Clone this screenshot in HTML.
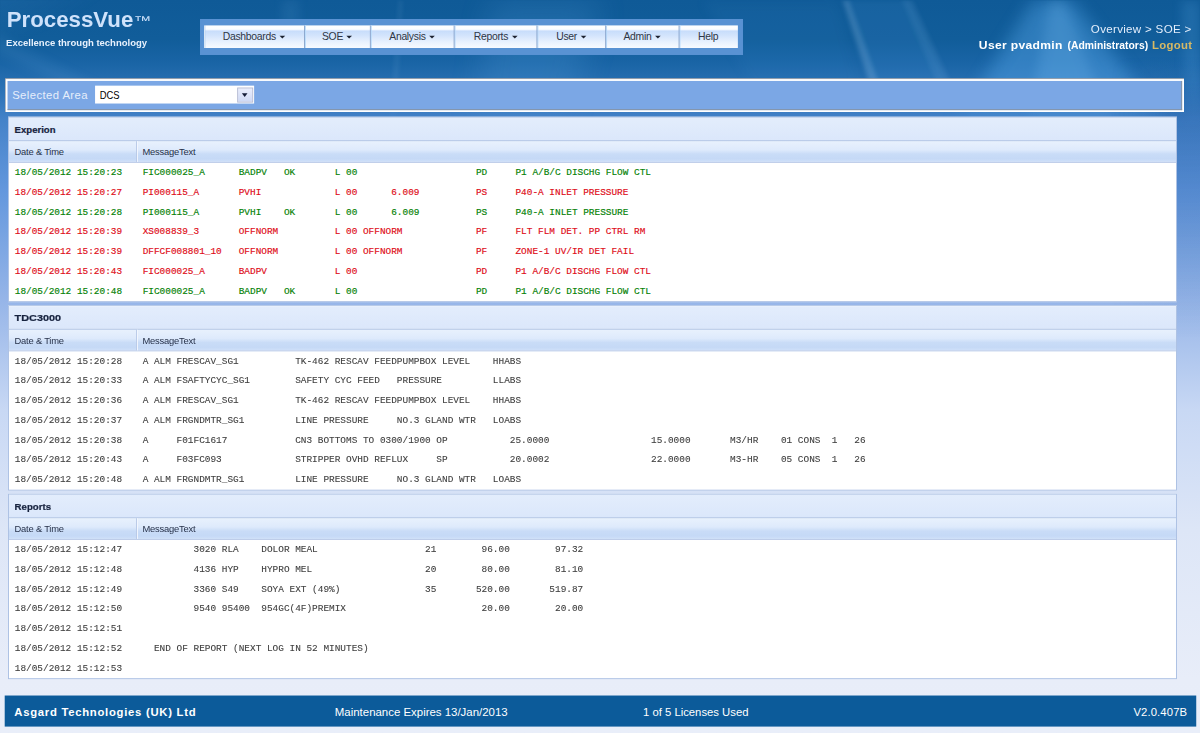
<!DOCTYPE html>
<html>
<head>
<meta charset="utf-8">
<title>ProcessVue</title>
<style>
html,body{margin:0;padding:0;width:1200px;height:733px;overflow:hidden;background:#e9eef9;}
body{font-family:"Liberation Sans",sans-serif;}
#w{position:absolute;left:0;top:0;width:1275px;height:779px;transform:scale(0.941176);transform-origin:0 0;overflow:hidden;filter:blur(0.3px);
 background:linear-gradient(to bottom,#0f5a97 0px,#115d9a 42px,#1964a5 66px,#2e74b8 100px,#4583c9 128px,#6397dd 202px,#96b5e8 319px,#c8d8f4 436px,#dde6f7 563px,#e8edf9 722px,#e9eef9 779px);}
#hdrbg{position:absolute;left:0;top:0;width:1275px;height:140px;}
#rshade{position:absolute;left:1180px;top:60px;width:95px;height:300px;background:linear-gradient(to bottom,rgba(12,70,140,0) 0,rgba(12,70,140,.22) 20%,rgba(12,70,140,.16) 50%,rgba(12,70,140,0) 100%);-webkit-mask-image:linear-gradient(to right,transparent 0,#000 70%);mask-image:linear-gradient(to right,transparent 0,#000 70%);}
#logo{position:absolute;left:7.2px;top:6.8px;color:#cfe2fb;font-weight:bold;font-size:23.65px;line-height:28px;white-space:nowrap;}
#logo .tm{font-weight:normal;font-size:13.5px;position:relative;top:-1.9px;margin-left:0px;display:inline-block;transform:scaleX(1.42);transform-origin:0 50%;}
#tag{position:absolute;left:6.5px;top:40px;color:#e8f1fd;font-weight:bold;font-size:10.1px;line-height:12px;white-space:nowrap;}
#menu{position:absolute;left:212.5px;top:20.2px;width:576px;height:38px;background:#5992d3;}
#strip{position:absolute;left:4.3px;top:6.4px;width:567px;height:24.4px;border-left:1px solid #fff;box-sizing:border-box;
 background:linear-gradient(to bottom,#ffffff 0,#fcfdff 17%,#c8ddfb 25%,#d3e4fc 45%,#e8f1fe 72%,#f8fbff 100%);}
#strip .dv{position:absolute;top:0;width:1px;height:24.4px;background:#8aa5cd;box-shadow:1px 0 0 #b9dcfc;}
#strip .it{position:absolute;top:0.8px;height:24.4px;color:#2e3646;font-size:11.05px;line-height:24.4px;text-align:center;white-space:nowrap;letter-spacing:-0.32px;}
#strip .it i{display:inline-block;width:0;height:0;border-left:3.2px solid transparent;border-right:3.2px solid transparent;border-top:3.6px solid #1c2230;margin-left:4px;vertical-align:middle;position:relative;top:-1px;}
.hr{position:absolute;white-space:nowrap;line-height:14px;transform-origin:0 50%;}
#crumb{left:1159.2px;top:24.1px;color:#e3eefc;font-size:11.5px;letter-spacing:0.3px;transform:scaleX(1.07);}
#u1{left:1040.2px;top:40.7px;color:#fff;font-weight:bold;font-size:11.3px;letter-spacing:0.3px;transform:scaleX(1.139);}
#u2{left:1134.3px;top:40.9px;color:#fff;font-weight:bold;font-size:11px;}
#u3{left:1223.6px;top:40.7px;color:#d7b964;font-weight:bold;font-size:11.3px;letter-spacing:0.3px;transform:scaleX(1.07);}
#bar{position:absolute;left:5.3px;top:82.7px;width:1252.7px;height:36.4px;box-sizing:border-box;background:#fff;border-top:1px solid #8793a3;border-left:1px solid #8793a3;}
#bar .in{position:absolute;left:2px;top:2px;right:2.1px;bottom:2.2px;background:#7ba7e5;border-right:1px solid #8793a3;border-bottom:1px solid #8793a3;}
#bar .lbl{position:absolute;left:6.6px;top:9.6px;color:#e6eefb;font-size:12px;line-height:16px;letter-spacing:0.45px;white-space:nowrap;}
#sel{position:absolute;left:95px;top:7.4px;width:169px;height:19.2px;background:#fff;box-sizing:border-box;}
#sel span{position:absolute;left:4.6px;top:3.1px;font-size:11.5px;line-height:14px;color:#000;transform:scaleX(.87);transform-origin:0 0;}
#sel .btn{position:absolute;right:1.6px;top:1.5px;width:16.6px;height:16.3px;box-sizing:border-box;border:1px solid #b3b9d3;background:linear-gradient(to bottom,#e9edfc,#cfd9f5);}
#sel .btn:after{content:"";position:absolute;left:3.4px;top:5.2px;border-left:3.9px solid transparent;border-right:3.9px solid transparent;border-top:4.3px solid #141c38;}
#panels{position:absolute;left:0;top:0;width:1241px;height:0;}
.panel{position:absolute;left:0;top:0;width:1242px;height:197px;box-sizing:border-box;border:1px solid #a9bfe3;background:#fff;overflow:hidden;}
.ptitle{height:24px;box-sizing:border-box;background:linear-gradient(to bottom,#e3edfc,#dbe7fb);color:#17233f;font-weight:bold;font-size:10px;line-height:15px;padding:5px 0 0 5.7px;-webkit-text-stroke:0.25px #17233f;}
.ptitle span{display:inline-block;transform-origin:0 50%;}
.ghead{height:24px;box-sizing:border-box;border-top:1px solid #a9bfe3;border-bottom:1px solid #b4c6e6;background:linear-gradient(to bottom,#e8f1fd 0,#deeafc 42%,#c9dcf7 62%,#c5d9f6 85%,#cfe0f9 100%);position:relative;color:#27324a;font-size:9.95px;}
.ghead .c1{position:absolute;left:0;top:0;width:136px;height:22px;box-sizing:border-box;border-right:1px solid #b4c6e6;padding:5.3px 0 0 5.9px;letter-spacing:-0.2px;line-height:13px;}
.ghead .c2{position:absolute;left:136px;top:0;height:22px;box-sizing:border-box;padding:5.3px 0 0 4.8px;letter-spacing:-0.2px;line-height:13px;border-left:1px solid #f4f8fe;}
.row{height:21px;position:relative;font-family:"Liberation Mono",monospace;font-size:10px;line-height:13px;white-space:pre;}
.row span{position:absolute;top:4.4px;}
.row .d{left:6.2px;}
.row .m{left:142.1px;}
.g{color:#068206;-webkit-text-stroke:0.17px #068206;}
.r{color:#de0c18;-webkit-text-stroke:0.17px #de0c18;}
.k{color:#404040;-webkit-text-stroke:0.1px #404040;}
#foot{position:absolute;left:5.2px;top:738.5px;width:1265.5px;height:33.9px;background:#0c5b9a;color:#fff;white-space:nowrap;}
#foot div{position:absolute;top:10.2px;line-height:16px;}
#f1{left:10px;font-weight:bold;font-size:12px;letter-spacing:0.77px;}
#f2{left:350.6px;font-size:12.15px;}
#f3{left:678px;font-size:12px;}
#f4{right:9.3px;font-size:12px;letter-spacing:0.12px;}
</style>
</head>
<body>
<div id="w">
<svg id="hdrbg" viewBox="0 0 1275 140" preserveAspectRatio="none">
<defs>
<filter id="b2" x="-50%" y="-50%" width="200%" height="200%"><feGaussianBlur stdDeviation="2"/></filter>
<filter id="b5" x="-50%" y="-50%" width="200%" height="200%"><feGaussianBlur stdDeviation="6"/></filter>
<filter id="b9" x="-50%" y="-50%" width="200%" height="200%"><feGaussianBlur stdDeviation="9"/></filter>
<filter id="b14" x="-50%" y="-50%" width="200%" height="200%"><feGaussianBlur stdDeviation="16"/></filter>
<radialGradient id="gl" cx="0" cy="0" r="1"><stop offset="0" stop-color="#6fb0ee" stop-opacity=".32"/><stop offset="1" stop-color="#6fb0ee" stop-opacity="0"/></radialGradient>
<linearGradient id="fade" x1="0" y1="0" x2="0" y2="1"><stop offset="0" stop-color="#fff" stop-opacity="1"/><stop offset=".62" stop-color="#fff" stop-opacity="1"/><stop offset="1" stop-color="#fff" stop-opacity="0"/></linearGradient>
<mask id="mk"><rect x="0" y="0" width="1275" height="140" fill="url(#fade)"/></mask>
</defs>
<g mask="url(#mk)">
<ellipse cx="0" cy="0" rx="150" ry="70" fill="url(#gl)"/>
<polygon points="-10,34 -10,52 110,112 110,94" fill="#8cc4f5" opacity=".10" filter="url(#b5)"/>
<polygon points="423,0 428,0 420,140 413,140" fill="#bfe0ff" opacity=".07" filter="url(#b2)"/>
<polygon points="300,0 318,0 318,30 300,30" fill="#8cc4f5" opacity=".10" filter="url(#b5)"/>
<polygon points="520,0 640,0 600,140 500,140" fill="#6db3ee" opacity=".16" filter="url(#b14)"/>
<polygon points="895,0 902,0 934,90 924,90" fill="#bfe0ff" opacity=".2" filter="url(#b2)"/>
<polygon points="958,0 970,0 1012,90 996,90" fill="#bfe0ff" opacity=".08" filter="url(#b2)"/>
<polygon points="1098,0 1140,0 1245,140 1010,140" fill="#58a8ea" opacity=".42" filter="url(#b9)"/>
<polygon points="1116,0 1130,0 1185,140 1090,140" fill="#7cc0f5" opacity=".22" filter="url(#b5)"/>
<polygon points="900,0 966,0 1010,95 932,95" fill="#5aa6e6" opacity=".11" filter="url(#b2)"/>
<polygon points="745,0 890,0 915,95 800,95" fill="#5aa6e6" opacity=".06" filter="url(#b5)"/>
<polygon points="1255,0 1275,0 1275,140 1262,140" fill="#6db8f5" opacity=".18" filter="url(#b5)"/>
</g>
</svg>
<div id="rshade"></div>
<div id="logo">ProcessVue<span class="tm">&#8482;</span></div>
<div id="tag">Excellence through technology</div>
<div id="menu"><div id="strip">
<div class="it" style="left:-1.30px;width:106.75px">Dashboards<i></i></div>
<div class="dv" style="left:105px"></div>
<div class="it" style="left:105.45px;width:70.15px">SOE<i></i></div>
<div class="dv" style="left:175px"></div>
<div class="it" style="left:175.60px;width:89.00px">Analysis<i></i></div>
<div class="dv" style="left:264px"></div>
<div class="it" style="left:264.60px;width:88.50px">Reports<i></i></div>
<div class="dv" style="left:352px"></div>
<div class="it" style="left:353.10px;width:72.20px">User<i></i></div>
<div class="dv" style="left:425px"></div>
<div class="it" style="left:425.30px;width:78.40px">Admin<i></i></div>
<div class="dv" style="left:503px"></div>
<div class="it" style="left:503.70px;width:62.00px">Help</div>
</div></div>
<div id="crumb" class="hr">Overview &gt; SOE &gt;</div>
<div id="u1" class="hr">User pvadmin</div><div id="u2" class="hr">(Administrators)</div><div id="u3" class="hr">Logout</div>
<div id="bar"><div class="in"></div><div class="lbl">Selected Area</div><div id="sel"><span>DCS</span><div class="btn"></div></div></div>
<div id="panels">
<div class="panel" style="transform:translate(8.5px,124px)"><div class="ptitle"><span style="transform:scaleX(1.016)">Experion</span></div><div class="ghead"><div class="c1">Date &amp; Time</div><div class="c2">MessageText</div></div>
<div class="row g"><span class="d">18/05/2012 15:20:23</span><span class="m">FIC000025_A      BADPV   OK       L 00                     PD     P1 A/B/C DISCHG FLOW CTL</span></div>
<div class="row r"><span class="d">18/05/2012 15:20:27</span><span class="m">PI000115_A       PVHI             L 00      6.009          PS     P40-A INLET PRESSURE</span></div>
<div class="row g"><span class="d">18/05/2012 15:20:28</span><span class="m">PI000115_A       PVHI    OK       L 00      6.009          PS     P40-A INLET PRESSURE</span></div>
<div class="row r"><span class="d">18/05/2012 15:20:39</span><span class="m">XS008839_3       OFFNORM          L 00 OFFNORM             PF     FLT FLM DET. PP CTRL RM</span></div>
<div class="row r"><span class="d">18/05/2012 15:20:39</span><span class="m">DFFCF008801_10   OFFNORM          L 00 OFFNORM             PF     ZONE-1 UV/IR DET FAIL</span></div>
<div class="row r"><span class="d">18/05/2012 15:20:43</span><span class="m">FIC000025_A      BADPV            L 00                     PD     P1 A/B/C DISCHG FLOW CTL</span></div>
<div class="row g"><span class="d">18/05/2012 15:20:48</span><span class="m">FIC000025_A      BADPV   OK       L 00                     PD     P1 A/B/C DISCHG FLOW CTL</span></div>
</div>
<div class="panel" style="transform:translate(8.5px,324.3px)"><div class="ptitle"><span style="transform:scaleX(1.155)">TDC3000</span></div><div class="ghead"><div class="c1">Date &amp; Time</div><div class="c2">MessageText</div></div>
<div class="row k"><span class="d">18/05/2012 15:20:28</span><span class="m">A ALM FRESCAV_SG1          TK-462 RESCAV FEEDPUMPBOX LEVEL    HHABS</span></div>
<div class="row k"><span class="d">18/05/2012 15:20:33</span><span class="m">A ALM FSAFTYCYC_SG1        SAFETY CYC FEED   PRESSURE         LLABS</span></div>
<div class="row k"><span class="d">18/05/2012 15:20:36</span><span class="m">A ALM FRESCAV_SG1          TK-462 RESCAV FEEDPUMPBOX LEVEL    HHABS</span></div>
<div class="row k"><span class="d">18/05/2012 15:20:37</span><span class="m">A ALM FRGNDMTR_SG1         LINE PRESSURE     NO.3 GLAND WTR   LOABS</span></div>
<div class="row k"><span class="d">18/05/2012 15:20:38</span><span class="m">A     F01FC1617            CN3 BOTTOMS TO 0300/1900 OP           25.0000                  15.0000       M3/HR    01 CONS  1   26</span></div>
<div class="row k"><span class="d">18/05/2012 15:20:43</span><span class="m">A     F03FC093             STRIPPER OVHD REFLUX     SP           20.0002                  22.0000       M3-HR    05 CONS  1   26</span></div>
<div class="row k"><span class="d">18/05/2012 15:20:48</span><span class="m">A ALM FRGNDMTR_SG1         LINE PRESSURE     NO.3 GLAND WTR   LOABS</span></div>
</div>
<div class="panel" style="transform:translate(8.5px,524.6px)"><div class="ptitle"><span style="transform:scaleX(1.024)">Reports</span></div><div class="ghead"><div class="c1">Date &amp; Time</div><div class="c2">MessageText</div></div>
<div class="row k"><span class="d">18/05/2012 15:12:47</span><span class="m">         3020 RLA    DOLOR MEAL                   21        96.00        97.32</span></div>
<div class="row k"><span class="d">18/05/2012 15:12:48</span><span class="m">         4136 HYP    HYPRO MEL                    20        80.00        81.10</span></div>
<div class="row k"><span class="d">18/05/2012 15:12:49</span><span class="m">         3360 S49    SOYA EXT (49%)               35       520.00       519.87</span></div>
<div class="row k"><span class="d">18/05/2012 15:12:50</span><span class="m">         9540 95400  954GC(4F)PREMIX                        20.00        20.00</span></div>
<div class="row k"><span class="d">18/05/2012 15:12:51</span><span class="m"></span></div>
<div class="row k"><span class="d">18/05/2012 15:12:52</span><span class="m">  END OF REPORT (NEXT LOG IN 52 MINUTES)</span></div>
<div class="row k"><span class="d">18/05/2012 15:12:53</span><span class="m"></span></div>
</div>

</div>
<div id="foot"><div id="f1">Asgard Technologies (UK) Ltd</div><div id="f2">Maintenance Expires 13/Jan/2013</div><div id="f3">1 of 5 Licenses Used</div><div id="f4">V2.0.407B</div></div>
</div>
</body>
</html>
